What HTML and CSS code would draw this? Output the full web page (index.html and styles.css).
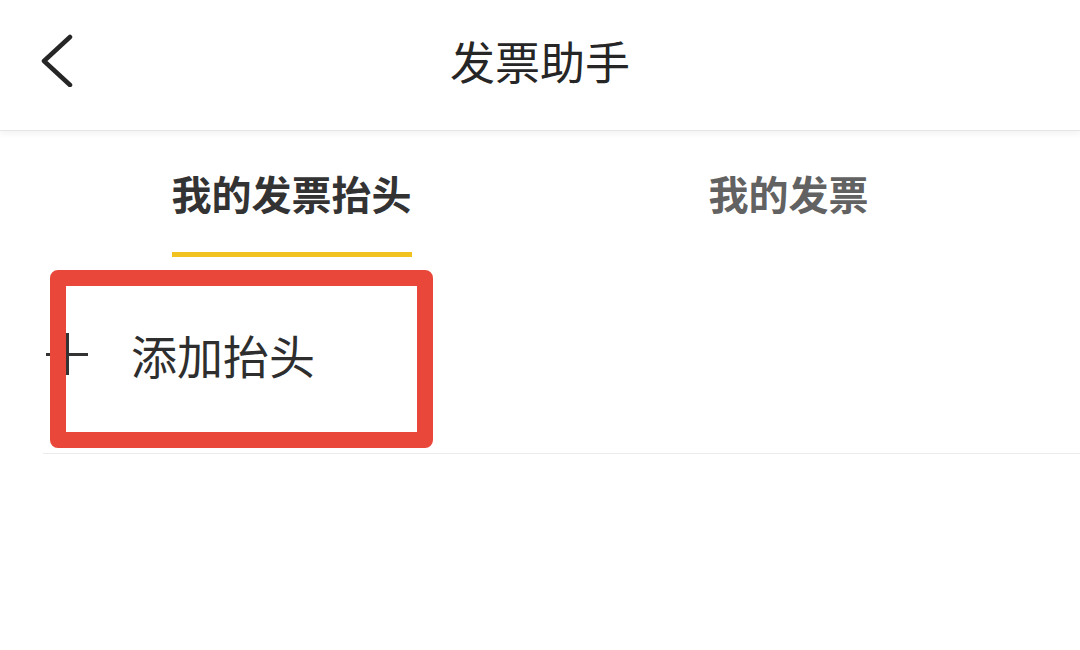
FILE: index.html
```html
<!DOCTYPE html>
<html lang="zh-CN">
<head>
  <meta charset="UTF-8">
  <title>发票助手</title>
  <link rel="stylesheet" href="styles.css">
</head>
<body>
  <header class="topbar">
    <button class="back" aria-label="返回">
      <svg width="40" height="60" viewBox="0 0 40 60">
        <polyline points="30,10 4,34 30,58" fill="none" stroke="#262626" stroke-width="4.5" stroke-linecap="round" stroke-linejoin="round"/>
      </svg>
    </button>
    <h1 class="title">发票助手</h1>
  </header>

  <nav class="tabs">
    <div class="tab active"><span>我的发票抬头</span></div>
    <div class="tab"><span>我的发票</span></div>
  </nav>

  <div class="list">
    <div class="row add-row">
      <span class="plus"></span>
      <span class="row-text">添加抬头</span>
    </div>
  </div>

  <div class="mark"></div>
</body>
</html>
```

FILE: styles.css
```css
body {
  margin: 0;
  background: #fff;
  font-family: "Noto Sans CJK SC", "Noto Sans", sans-serif;
  color: #262626;
  width: 1080px;
  height: 650px;
  overflow: hidden;
  position: relative;
}

.topbar {
  height: 131px;
  box-sizing: border-box;
  padding-bottom: 8px;
  display: flex;
  align-items: center;
  justify-content: center;
  position: relative;
  border-bottom: 1px solid #e6e6e6;
  box-shadow: 0 3px 6px rgba(0, 0, 0, 0.05);
}

.back {
  position: absolute;
  left: 40px;
  top: 27px;
  background: none;
  border: none;
  padding: 0;
  cursor: pointer;
}

.back svg {
  display: block;
}

.title {
  margin: 0;
  font-size: 45px;
  font-weight: 400;
  line-height: 60px;
  color: #262626;
}

.tabs {
  display: flex;
  padding: 0 43px;
}

.tab {
  flex: 1;
  display: flex;
  justify-content: center;
  padding-top: 34px;
}

.tab span {
  display: inline-block;
  font-size: 40px;
  font-weight: 700;
  line-height: 56px;
  color: #626262;
  padding-bottom: 31px;
  border-bottom: 5px solid transparent;
}

.tab.active span {
  color: #333;
  border-bottom-color: #f0c320;
}

.list {
  padding-left: 43px;
}

.row {
  height: 197px;
  box-sizing: border-box;
  padding-bottom: 3px;
  display: flex;
  align-items: center;
  border-bottom: 1px solid #ececec;
}

.plus {
  position: relative;
  width: 42px;
  height: 42px;
  margin-left: 3px;
  margin-right: 43px;
}

.plus::before,
.plus::after {
  content: "";
  position: absolute;
  background: #333;
}

.plus::before {
  left: 0;
  right: 0;
  top: 20px;
  height: 3px;
}

.plus::after {
  top: 0;
  bottom: 0;
  left: 20px;
  width: 3px;
}

.row-text {
  font-size: 46px;
  line-height: 60px;
  color: #2e2e2e;
}

.mark {
  position: absolute;
  left: 50px;
  top: 270px;
  width: 383px;
  height: 178px;
  box-sizing: border-box;
  border: 16px solid #e8473a;
  border-radius: 8px;
}
```
